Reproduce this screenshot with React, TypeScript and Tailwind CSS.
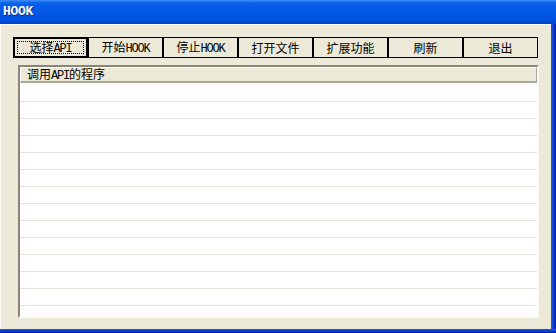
import React from "react";

const BUTTONS = ["选择API", "开始HOOK", "停止HOOK", "打开文件", "扩展功能", "刷新", "退出"];

// SimSun-like mix: CJK from Noto, latin runs from a narrow serif mono
function Label({ text }: { text: string }) {
  const parts = text.split(/([A-Za-z]+)/);
  return (
    <>
      {parts.map((p, i) =>
        /^[A-Za-z]+$/.test(p) ? (
          <span key={i} className="[font-family:'Liberation_Mono',monospace] tracking-[-1.2px]">
            {p}
          </span>
        ) : (
          <span key={i}>{p}</span>
        )
      )}
    </>
  );
}

export default function App() {
  return (
    <div className="w-[556px] h-[333px] flex flex-col overflow-hidden [font-family:'Noto_Sans_CJK_SC',sans-serif] text-[12px] text-black">
      {/* Title bar */}
      <div className="h-[24px] shrink-0 flex items-center pl-[3px] bg-[linear-gradient(to_bottom,#3d8ff7_0%,#0b61ea_12%,#0258e6_45%,#0053e0_80%,#0044c8_100%)]">
        <span className="[font-family:'Liberation_Mono',monospace] font-bold text-[13px] text-white tracking-[-0.3px] [text-shadow:1px_1px_0_#0a2a8a]">
          HOOK
        </span>
      </div>

      <div className="flex-1 flex min-h-0">
        {/* Window body */}
        <div className="flex-1 flex flex-col bg-[#ece9d8] border-t border-l border-[#fdfcf7] pt-[12px] pb-[11px]">
          {/* Toolbar buttons */}
          <div className="flex ml-[12px] h-[21px]">
            {BUTTONS.map((b, i) => (
              <div
                key={b}
                className={
                  i === 0
                    ? "relative w-[75px] h-full flex items-center justify-center border-2 border-black bg-[#ece9d8]"
                    : "relative w-[75px] h-full flex items-center justify-center border border-black bg-[#ece9d8]"
                }
              >
                {i === 0 && (
                  <span className="absolute inset-x-[2px] inset-y-[2px] border border-dotted border-black" />
                )}
                <span className="leading-none">
                  <Label text={b} />
                </span>
              </div>
            ))}
          </div>

          {/* List view */}
          <div className="mt-[7px] ml-[17px] w-[521px] flex-1 min-h-0 flex flex-col border-2 border-t-[#8a877a] border-l-[#8a877a] border-b-[#fbfaf5] border-r-[#fbfaf5] bg-white overflow-hidden">
            <div className="h-[16px] shrink-0 flex items-center pl-[6px] bg-[#ece9d8] border-t border-l border-white border-b-2 border-b-[#aca899] border-r border-r-[#aca899]">
              <span className="leading-none">
                <Label text="调用API的程序" />
              </span>
            </div>
            <div className="h-[19px] shrink-0 border-b border-[#e4e2d9]" />
            {Array.from({ length: 14 }).map((_, i) => (
              <div key={i} className="h-[17px] shrink-0 border-b border-[#e4e2d9]" />
            ))}
          </div>
        </div>
        {/* Right frame */}
        <div className="w-[5px] shrink-0 bg-[linear-gradient(to_right,#1a5ae0,#0b3dd8,#001a9c)]" />
      </div>

      {/* Bottom frame */}
      <div className="h-[4px] shrink-0 bg-[linear-gradient(to_bottom,#1a5ae0,#0b3dd8,#001a9c)]" />
    </div>
  );
}
